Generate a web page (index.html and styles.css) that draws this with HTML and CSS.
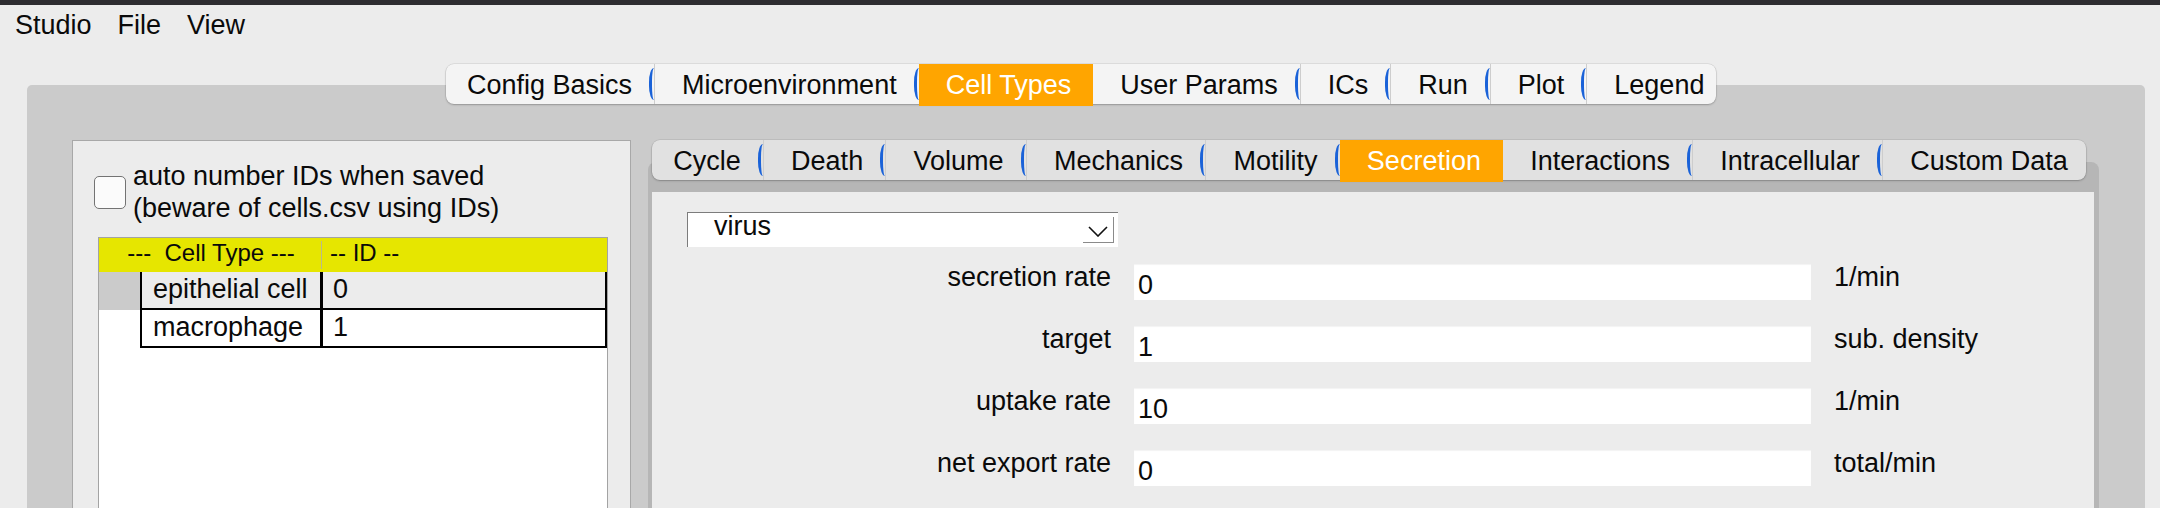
FILE: index.html
```html
<!DOCTYPE html>
<html>
<head>
<meta charset="utf-8">
<title>Studio</title>
<link rel="stylesheet" href="styles.css">
</head>
<body>
<div class="topbar"></div>
<div class="menubar">
  <span class="menu-item">Studio</span>
  <span class="menu-item">File</span>
  <span class="menu-item">View</span>
</div>
<div class="tabwidget">
  <div class="tabbar main-tabs">
    <div class="tab mark">Config Basics</div>
    <div class="tab mark">Microenvironment</div>
    <div class="tab selected">Cell Types</div>
    <div class="tab mark after-selected">User Params</div>
    <div class="tab mark">ICs</div>
    <div class="tab mark">Run</div>
    <div class="tab mark">Plot</div>
    <div class="tab">Legend</div>
  </div>
  <div class="panel">
    <div class="celltypes">
      <div class="autonum">
        <span class="checkbox"></span>
        <span class="autonum-text">auto number IDs when saved<br>(beware of cells.csv using IDs)</span>
      </div>
      <div class="table">
        <div class="thead">
          <div class="th th-type">---&nbsp; Cell Type ---</div>
          <div class="th th-id">-- ID --</div>
        </div>
        <div class="row current">
          <div class="vh"></div>
          <div class="cells"><div class="cell c1">epithelial cell</div><div class="cell c2">0</div></div>
        </div>
        <div class="row">
          <div class="vh"></div>
          <div class="cells"><div class="cell c1">macrophage</div><div class="cell c2">1</div></div>
        </div>
      </div>
    </div>
    <div class="subwidget">
      <div class="tabbar sub-tabs">
        <div class="tab mark">Cycle</div>
        <div class="tab mark">Death</div>
        <div class="tab mark">Volume</div>
        <div class="tab mark">Mechanics</div>
        <div class="tab mark">Motility</div>
        <div class="tab selected">Secretion</div>
        <div class="tab mark after-selected">Interactions</div>
        <div class="tab mark">Intracellular</div>
        <div class="tab">Custom Data</div>
      </div>
      <div class="pane">
        <div class="pane-body">
          <div class="combo">
            <span class="combo-text">virus</span>
            <span class="combo-btn">
              <svg width="20" height="11" viewBox="0 0 20 11"><polyline points="1,1 10,10 19,1" fill="none" stroke="#111" stroke-width="1.6"/></svg>
            </span>
          </div>
          <div class="form">
            <label class="flabel">secretion rate</label>
            <input class="finput" type="text" value="0" readonly>
            <span class="funit">1/min</span>

            <label class="flabel">target</label>
            <input class="finput" type="text" value="1" readonly>
            <span class="funit">sub. density</span>

            <label class="flabel">uptake rate</label>
            <input class="finput" type="text" value="10" readonly>
            <span class="funit">1/min</span>

            <label class="flabel">net export rate</label>
            <input class="finput" type="text" value="0" readonly>
            <span class="funit">total/min</span>
          </div>
        </div>
      </div>
    </div>
  </div>
</div>
</body>
</html>
```

FILE: styles.css
```css
html, body {
  margin: 0;
  padding: 0;
  overflow: hidden;
}

body {
  background: #ececec;
  color: #0a0a0a;
  font-family: "Liberation Sans", Arial, sans-serif;
  font-size: 27px;
}

.topbar {
  height: 5px;
  background: #2e2d31;
}

.menubar {
  display: flex;
  gap: 26px;
  height: 40px;
  line-height: 40px;
  padding-left: 15px;
}

.tabwidget {
  margin: 19px 15px 0 27px;
}

.tabbar {
  display: flex;
  height: 40px;
  border-radius: 8px;
  position: relative;
  z-index: 1;
  box-sizing: border-box;
  box-shadow: 0 0 0 0.5px rgba(0, 0, 0, 0.12), 0 1px 2px rgba(0, 0, 0, 0.22);
}

.main-tabs {
  background: #f4f4f4;
  width: 1270px;
  margin-left: 419px;
}

.sub-tabs {
  background: #e1e1e1;
  width: 1434px;
  margin-left: 4px;
}

.tab {
  flex: 1 1 auto;
  display: flex;
  justify-content: center;
  box-sizing: border-box;
  padding: 2px 22px 0 27px;
  line-height: 38px;
  white-space: nowrap;
  position: relative;
  border-left: 1px solid #cdcdcd;
}

.tab:first-child {
  border-left: 0;
  padding-left: 21px;
}

.tab:last-child {
  padding-right: 18px;
}

.tab.selected {
  background: #ffa500;
  color: #fff;
  border-left: 0;
  align-self: flex-start;
  height: 42px;
}

.tab.after-selected {
  border-left: 0;
}

.tab.mark::after {
  content: "";
  position: absolute;
  right: 0;
  top: 4px;
  height: 32px;
  width: 2px;
  border-left: 3px solid #1a62d8;
  border-radius: 5px 0 0 5px / 14px 0 0 14px;
}

.panel {
  display: flex;
  align-items: flex-start;
  margin-top: -19px;
  padding: 55px 0 0 45px;
  background: #cbcbcb;
  border-radius: 5px 5px 0 0;
  height: 500px;
  box-sizing: border-box;
}

/* left: cell types list */
.celltypes {
  width: 559px;
  height: 420px;
  box-sizing: border-box;
  border: 1px solid #a8a8a8;
  background: #ececec;
  padding: 19px 0 0 21px;
  flex: none;
}

.autonum {
  display: flex;
  align-items: center;
  gap: 7px;
  line-height: 32px;
}

.checkbox {
  width: 32px;
  height: 33px;
  box-sizing: border-box;
  border: 1.5px solid #737373;
  border-radius: 5px;
  background: #fbfbfb;
  flex: none;
}

.table {
  margin: 13px 0 0 4px;
  width: 510px;
  height: 300px;
  box-sizing: border-box;
  border: 1px solid #a3a3a3;
  background: #fff;
}

.thead {
  display: flex;
  height: 34px;
  background: #e6e600;
  font-size: 24px;
  line-height: 30px;
}

.th-type {
  width: 222px;
  text-align: center;
  padding-left: 2px;
  box-sizing: border-box;
}

.th-id {
  flex: 1;
  padding-left: 9px;
  background: linear-gradient(#b9b98c, #b9b98c) left 3px / 1px 28px no-repeat;
}

.row {
  display: flex;
  height: 38px;
}

.vh {
  width: 41px;
  flex: none;
}

.row.current .vh {
  background: #cbcbcb;
}

.cells {
  flex: 1;
  display: flex;
  border: 2px solid #000;
  border-top: 0;
  line-height: 34px;
}

.row.current .cells {
  background: #ececec;
}

.c1 {
  width: 181px;
  padding-left: 11px;
  box-sizing: border-box;
  border-right: 3px solid #000;
  flex: none;
}

.c2 {
  flex: 1;
  padding-left: 10px;
}

/* right: sub tab widget */
.subwidget {
  margin-left: 17px;
  width: 1451px;
  flex: none;
}

.pane {
  margin-top: -18px;
  background: #b6b6b6;
  border-radius: 8px 8px 0 0;
  padding: 30px 5px 0 4px;
}

.pane-body {
  background: #ececec;
  height: 320px;
  padding: 20px 0 0 35px;
}

.combo {
  display: flex;
  align-items: flex-start;
  width: 431px;
  height: 35px;
  box-sizing: border-box;
  background: #fff;
  border-top: 1px solid #7c7c7c;
  border-left: 1px solid #7c7c7c;
  padding-left: 26px;
  line-height: 27px;
}

.combo-btn {
  margin-left: auto;
  margin-top: 4px;
  margin-right: 4px;
  width: 31px;
  height: 26px;
  box-sizing: border-box;
  border-right: 1px solid #8a8a8a;
  border-bottom: 1px solid #8a8a8a;
  display: flex;
  align-items: center;
  justify-content: center;
  padding-top: 3px;
}

.form {
  display: grid;
  grid-template-columns: 424px 677px auto;
  grid-auto-rows: 36px;
  column-gap: 23px;
  row-gap: 26px;
  margin-top: 17px;
}

.flabel,
.funit {
  line-height: 26px;
  align-self: start;
}

.flabel {
  text-align: right;
}

.finput {
  border: 0;
  margin: 0;
  height: 36px;
  padding: 6px 0 0 4px;
  box-sizing: border-box;
  font: inherit;
  color: #0a0a0a;
  background: #fff;
  box-shadow: inset 0 1px 1px rgba(0, 0, 0, 0.05);
  outline: none;
}
```
